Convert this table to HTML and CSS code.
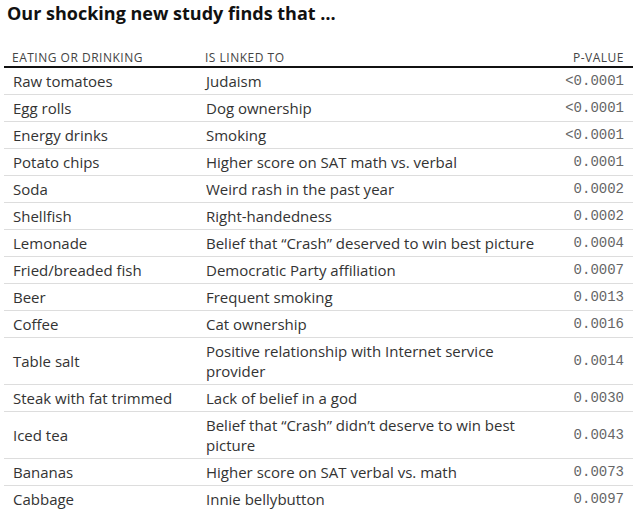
FILE: index.html
```html
<!DOCTYPE html>
<html>
<head>
<meta charset="utf-8">
<link rel="stylesheet" href="styles.css">
</head>
<body>
<h1 class="title">Our shocking new study finds that …</h1>
<table class="study">
  <colgroup><col class="c1"><col class="c2"><col class="c3"></colgroup>
  <thead>
    <tr><th>Eating or drinking</th><th>Is linked to</th><th class="num">P-value</th></tr>
  </thead>
  <tbody>
    <tr><td>Raw tomatoes</td><td>Judaism</td><td class="num">&lt;0.0001</td></tr>
    <tr><td>Egg rolls</td><td>Dog ownership</td><td class="num">&lt;0.0001</td></tr>
    <tr><td>Energy drinks</td><td>Smoking</td><td class="num">&lt;0.0001</td></tr>
    <tr><td>Potato chips</td><td>Higher score on SAT math vs. verbal</td><td class="num">0.0001</td></tr>
    <tr><td>Soda</td><td>Weird rash in the past year</td><td class="num">0.0002</td></tr>
    <tr><td>Shellfish</td><td>Right-handedness</td><td class="num">0.0002</td></tr>
    <tr><td>Lemonade</td><td>Belief that “Crash” deserved to win best picture</td><td class="num">0.0004</td></tr>
    <tr><td>Fried/breaded fish</td><td>Democratic Party affiliation</td><td class="num">0.0007</td></tr>
    <tr><td>Beer</td><td>Frequent smoking</td><td class="num">0.0013</td></tr>
    <tr><td>Coffee</td><td>Cat ownership</td><td class="num">0.0016</td></tr>
    <tr><td>Table salt</td><td>Positive relationship with Internet service provider</td><td class="num">0.0014</td></tr>
    <tr><td>Steak with fat trimmed</td><td>Lack of belief in a god</td><td class="num">0.0030</td></tr>
    <tr><td>Iced tea</td><td>Belief that “Crash” didn’t deserve to win best picture</td><td class="num">0.0043</td></tr>
    <tr><td>Bananas</td><td>Higher score on SAT verbal vs. math</td><td class="num">0.0073</td></tr>
    <tr><td>Cabbage</td><td>Innie bellybutton</td><td class="num">0.0097</td></tr>
  </tbody>
</table>
</body>
</html>
```
FILE: styles.css
```css
html, body {
  margin: 0;
  padding: 0;
  background: #fff;
}
body {
  font-family: "Open Sans", "Liberation Sans", sans-serif;
  color: #222;
}
.title {
  margin: 0;
  padding: 1px 0 0 7px;
  font-family: "Open Sans", "Liberation Sans", sans-serif;
  font-weight: 700;
  font-size: 18px;
  line-height: 24px;
  color: #111;
}
.study {
  margin: 25px 0 0 4px;
  width: 629px;
  border-collapse: collapse;
  table-layout: fixed;
}
.c1 { width: 193px; }
.c2 { width: 356px; }
.c3 { width: 80px; }
.study th {
  font-weight: 400;
  font-size: 12px;
  line-height: 14px;
  letter-spacing: 0.5px;
  text-transform: uppercase;
  color: #444;
  text-align: left;
  padding: 1px 9px 1px 8px;
  border-bottom: 2px solid #111;
}
.study td {
  font-size: 15px;
  line-height: 20px;
  color: #333;
  padding: 3px 9px 3px 9px;
  border-bottom: 1px solid #ddd;
  vertical-align: middle;
}
.study tbody tr:last-child td { border-bottom: 0; }
.study .num {
  text-align: right;
  font-family: "Liberation Mono", "DejaVu Sans Mono", monospace;
  font-size: 14px;
  color: #666;
}
.study th.num {
  font-family: "Open Sans", "Liberation Sans", sans-serif;
  font-size: 12px;
  color: #444;
}
```
